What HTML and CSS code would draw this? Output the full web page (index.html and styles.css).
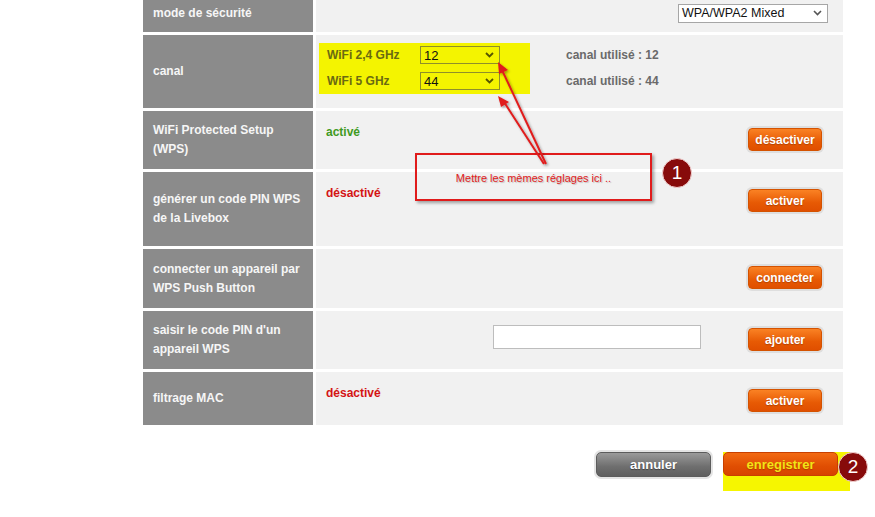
FILE: index.html
```html
<!DOCTYPE html>
<html lang="fr">
<head>
<meta charset="utf-8">
<title>WiFi</title>
<link rel="stylesheet" href="styles.css">
</head>
<body>
<div class="page">
  <div class="table">
    <div class="row r1">
      <div class="label">mode de sécurité</div>
      <div class="value v-center v-end">
        <div class="select sel-wpa"><span>WPA/WPA2 Mixed</span><svg class="chev" width="9" height="6" viewBox="0 0 9 6"><polyline points="1,1 4.5,4.5 8,1" fill="none" stroke="#555" stroke-width="1.6"/></svg></div>
      </div>
    </div>
    <div class="row r2">
      <div class="label">canal</div>
      <div class="value canal">
        <div class="hl">
          <div class="ch-line"><span class="ch-name">WiFi 2,4 GHz</span><div class="select sel-ch"><span>12</span><svg class="chev" width="9" height="6" viewBox="0 0 9 6"><polyline points="1,1 4.5,4.5 8,1" fill="none" stroke="#555500" stroke-width="1.8"/></svg></div></div>
          <div class="ch-line"><span class="ch-name">WiFi 5 GHz</span><div class="select sel-ch"><span>44</span><svg class="chev" width="9" height="6" viewBox="0 0 9 6"><polyline points="1,1 4.5,4.5 8,1" fill="none" stroke="#555500" stroke-width="1.8"/></svg></div></div>
        </div>
        <div class="used">
          <div class="used-line">canal utilisé : 12</div>
          <div class="used-line">canal utilisé : 44</div>
        </div>
      </div>
    </div>
    <div class="row r3">
      <div class="label">WiFi Protected Setup (WPS)</div>
      <div class="value"><span class="state on">activé</span><button class="btn">désactiver</button></div>
    </div>
    <div class="row r4">
      <div class="label">générer un code PIN WPS de la Livebox</div>
      <div class="value"><span class="state off">désactivé</span><button class="btn">activer</button></div>
    </div>
    <div class="row r5">
      <div class="label">connecter un appareil par WPS Push Button</div>
      <div class="value"><span class="state"></span><button class="btn">connecter</button></div>
    </div>
    <div class="row r6">
      <div class="label">saisir le code PIN d'un appareil WPS</div>
      <div class="value"><span class="state"></span><input class="pin" type="text"><button class="btn">ajouter</button></div>
    </div>
    <div class="row r7">
      <div class="label">filtrage MAC</div>
      <div class="value"><span class="state off">désactivé</span><button class="btn">activer</button></div>
    </div>
  </div>
  <div class="footer">
    <button class="big cancel">annuler</button>
    <div class="hl-save"><button class="big save">enregistrer</button></div>
  </div>
</div>

<div class="note">Mettre les mèmes réglages ici ..</div>
<div class="badge b1">1</div>
<div class="badge b2">2</div>
<svg class="arrows" width="875" height="517" viewBox="0 0 875 517">
  <defs>
    <filter id="sh" x="-20%" y="-20%" width="140%" height="140%">
      <feDropShadow dx="1.5" dy="1.5" stdDeviation="1" flood-color="#000" flood-opacity="0.35"/>
    </filter>
  </defs>
  <g filter="url(#sh)" fill="#e01b1b" stroke="#e01b1b">
    <line x1="546" y1="164" x2="502" y2="70" stroke-width="2"/>
    <polygon points="498,62 508,70 499,74" stroke="none"/>
    <line x1="544" y1="164" x2="504" y2="102" stroke-width="2"/>
    <polygon points="498,96 509,102 501,107" stroke="none"/>
  </g>
</svg>
</body>
</html>
```
FILE: styles.css
```css
html, body {
  margin: 0;
  padding: 0;
  background: #ffffff;
}
body {
  width: 875px;
  height: 517px;
  overflow: hidden;
  position: relative;
  font-family: "Liberation Sans", Arial, sans-serif;
  font-size: 12px;
}
.page {
  margin-top: -6px;
  padding-left: 143px;
}
.table {
  width: 700px;
  display: flex;
  flex-direction: column;
  gap: 3px;
}
.row {
  display: grid;
  grid-template-columns: 170px 527px;
  column-gap: 3px;
}
.r1 { height: 38px; }
.r2 { height: 73px; }
.r3 { height: 58px; }
.r4 { height: 74px; }
.r5 { height: 59px; }
.r6 { height: 58px; }
.r7 { height: 53px; }

.label {
  background: #8b8b8b;
  color: #f6f6f6;
  font-weight: bold;
  font-size: 12px;
  line-height: 19px;
  padding: 0 12px 0 10px;
  display: flex;
  align-items: center;
}
.value {
  background: #f1f1f1;
  display: flex;
  align-items: flex-start;
  padding: 14px 21px 0 10px;
}
.value.v-center {
  align-items: center;
  padding: 0 15px 0 10px;
}
.value.v-end { justify-content: flex-end; }

.select {
  display: flex;
  align-items: center;
  justify-content: space-between;
  box-sizing: border-box;
  background: #fff;
  border: 1px solid #a6a6a6;
  color: #111;
  font-size: 13px;
}
.select span { padding-left: 3px; }
.select .chev { margin-right: 5px; }
.sel-wpa { width: 150px; height: 19px; font-size: 12.5px; }

.value.canal {
  padding: 8px 0 0 3px;
  align-items: flex-start;
}
.hl {
  background: #f4f400;
  width: 211px;
  height: 51px;
  box-sizing: border-box;
  padding: 3px 0 0 8px;
  display: flex;
  flex-direction: column;
  gap: 8px;
}
.ch-line {
  display: flex;
  align-items: center;
  height: 18px;
}
.ch-name {
  width: 93px;
  font-weight: bold;
  color: #6a6a12;
}
.sel-ch {
  width: 80px;
  height: 18px;
  background: #f4f400;
  border-color: #8f8f2a;
}
.used {
  margin-left: 36px;
  padding-top: 3px;
  display: flex;
  flex-direction: column;
  gap: 8px;
}
.used-line {
  height: 18px;
  line-height: 18px;
  font-weight: bold;
  color: #6a6a6a;
}

.state {
  flex: 1;
  font-weight: bold;
  line-height: 15px;
}
.state.on { color: #3f9a22; }
.state.off { color: #d41414; }

.btn {
  margin-top: 3px;
  width: 74px;
  height: 23px;
  box-sizing: border-box;
  border: 1px solid #d45200;
  border-radius: 4px;
  background: linear-gradient(#fa8224, #e75a04 60%, #e04f00);
  box-shadow: 0 0 0 2px #dedede;
  color: #fff;
  font-family: "Liberation Sans", Arial, sans-serif;
  font-weight: bold;
  font-size: 12px;
  text-shadow: 0 1px 1px rgba(120, 40, 0, 0.45);
  padding: 0;
}
.pin {
  width: 208px;
  height: 24px;
  box-sizing: border-box;
  border: 1px solid #bdbdbd;
  background: #fff;
  margin: 0 47px 0 0;
  padding: 0;
}

.footer {
  width: 700px;
  margin-top: 27px;
  display: flex;
  justify-content: flex-end;
  align-items: flex-start;
  gap: 12px;
}
.big {
  width: 115px;
  height: 25px;
  box-sizing: border-box;
  border-radius: 5px;
  font-family: "Liberation Sans", Arial, sans-serif;
  font-weight: bold;
  font-size: 13px;
  padding: 0;
}
.cancel {
  background: linear-gradient(#9a9a9a, #6e6e6e 60%, #5f5f5f);
  border: 1px solid #5c5c5c;
  box-shadow: 0 0 0 2px #e4e4e4;
  color: #fff;
  text-shadow: 0 1px 1px rgba(0,0,0,0.4);
}
.hl-save {
  width: 127px;
  height: 39px;
  background: #f6f600;
  margin-right: -7px;
}
.save {
  height: 24px;
  background: linear-gradient(#f26a12, #e04e02 60%, #d84300);
  border: 1px solid #c84000;
  color: #f2e416;
  text-shadow: 0 1px 1px rgba(120, 30, 0, 0.4);
}

.note {
  position: absolute;
  left: 415px;
  top: 153px;
  width: 237px;
  height: 48px;
  box-sizing: border-box;
  border: 2px solid #e01b1b;
  box-shadow: 2px 2px 3px rgba(0,0,0,0.35);
  display: flex;
  align-items: center;
  justify-content: center;
  color: #e02020;
  font-size: 11px;
  text-shadow: 1px 1px 1px rgba(0,0,0,0.22);
  padding-top: 2px;
}
.badge {
  position: absolute;
  width: 30px;
  height: 30px;
  box-sizing: border-box;
  border-radius: 50%;
  background: #870b0b;
  border: 1px solid #f2d0d0;
  color: #fff;
  font-size: 19px;
  display: flex;
  align-items: center;
  justify-content: center;
}
.b1 { left: 662px; top: 158px; }
.b2 { left: 838px; top: 452px; }
.arrows {
  position: absolute;
  left: 0;
  top: 0;
  pointer-events: none;
}
```
